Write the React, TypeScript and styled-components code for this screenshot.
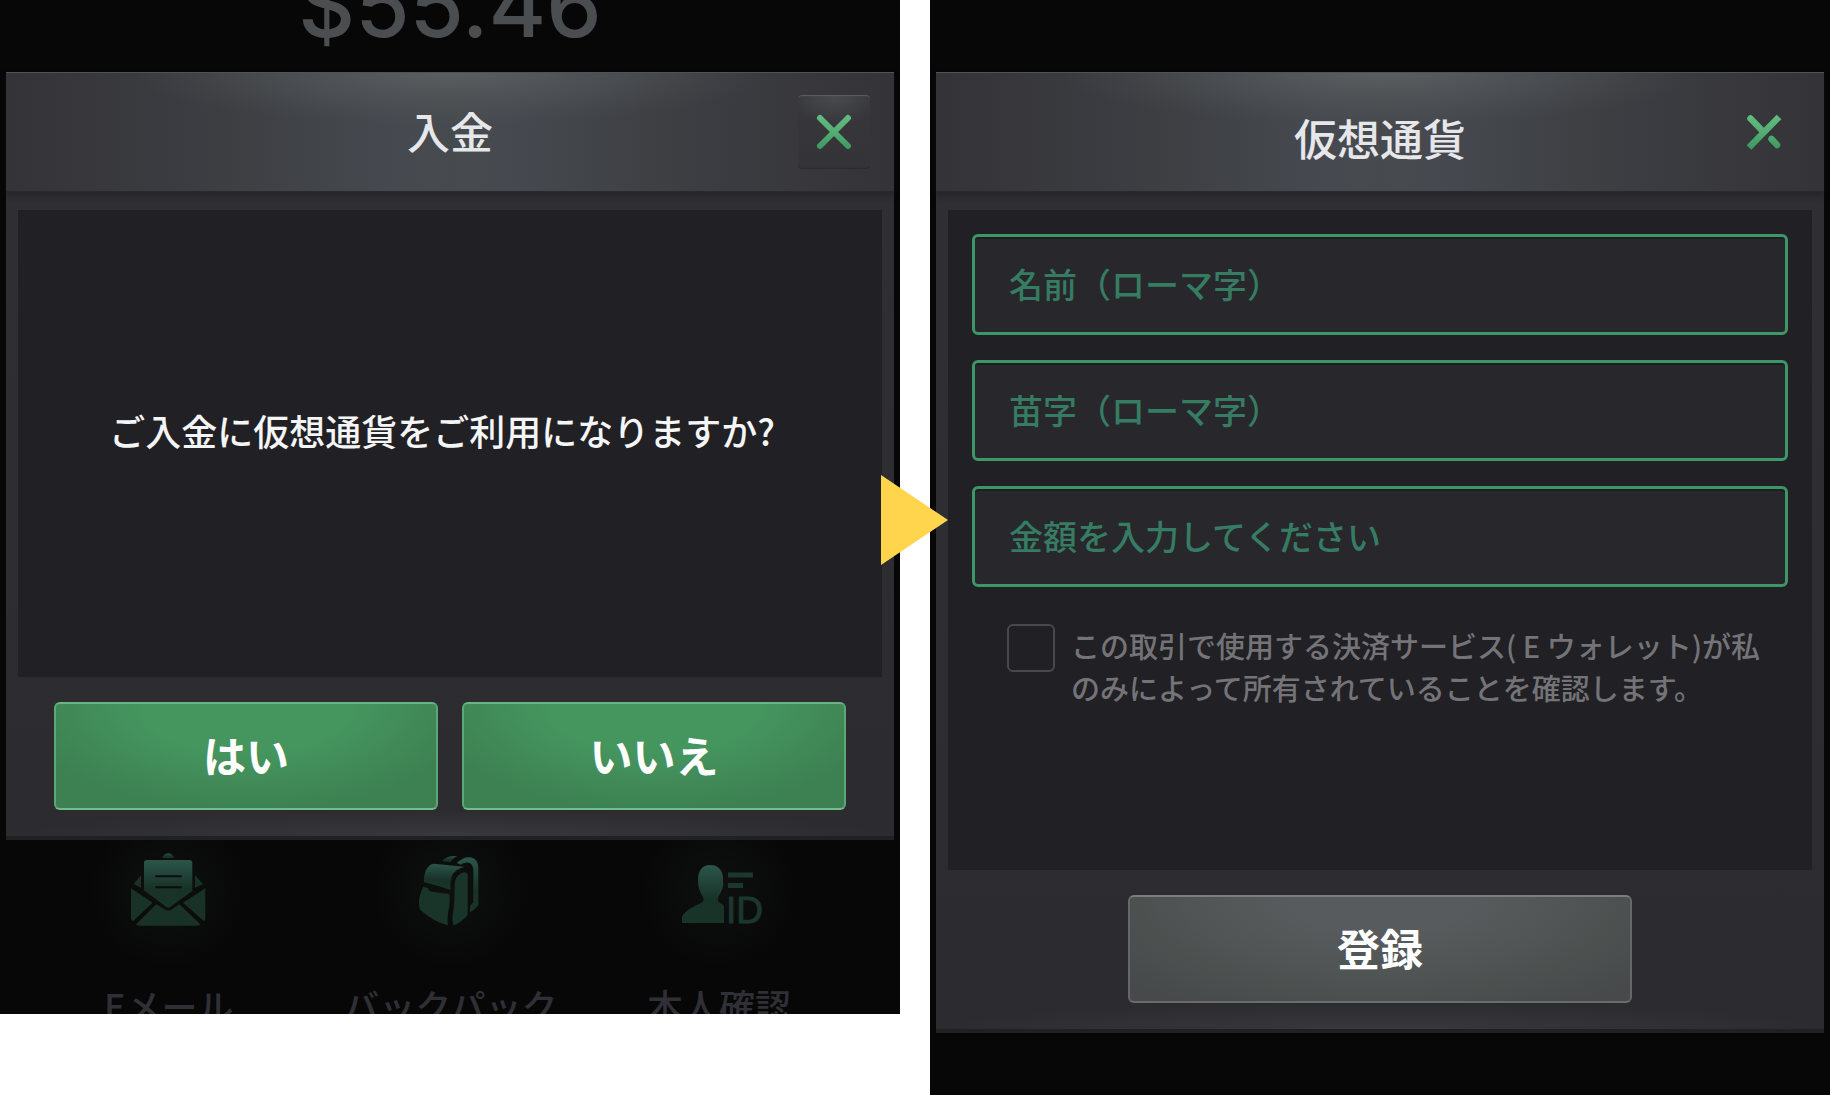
import React, { useState } from "react";
import styled, { createGlobalStyle, css } from "styled-components";

const color = {
  screen: "#070707",
  modal: "#302f34",
  modalLow: "#2c2c30",
  panel: "#212024",
  field: "#28272c",
  green: "#3d9668",
  placeholder: "#357c62",
  title: "#e6e7ea",
};

const GlobalStyle = createGlobalStyle`
  * { box-sizing: border-box; }
  body {
    margin: 0;
    background: #fff;
    font-family: "Noto Sans CJK JP", "Noto Sans", sans-serif;
  }
  button, input { font-family: inherit; }
`;

const Page = styled.main`
  display: grid;
  grid-template-columns: minmax(0, 1fr) 30px minmax(0, 1fr);
  min-height: 100vh;
`;

const Screen = styled.section<{ $fill?: boolean }>`
  display: flex;
  flex-direction: column;
  align-self: ${(p) => (p.$fill ? "stretch" : "start")};
  background: ${color.screen};
  overflow: hidden;
`;

const TopArea = styled.div`
  display: flex;
  justify-content: center;
  align-items: flex-end;
  height: 72px;
  overflow: hidden;
`;

const Balance = styled.div`
  padding-bottom: 17px;
  font-family: Inter, "Liberation Sans", sans-serif;
  font-size: 88px;
  font-weight: 500;
  line-height: 100px;
  color: #4b4e51;
`;

const Modal = styled.div`
  margin: 0 6px;
  background: radial-gradient(ellipse 50% 26px at 50% 100%, #39383d, transparent),
    linear-gradient(${color.modal}, ${color.modalLow});
  border-bottom: 4px solid #212023;
`;

const Header = styled.header`
  display: grid;
  grid-template-columns: 1fr auto 1fr;
  align-items: center;
  height: 120px;
  padding: 0 24px;
  border-top: 1px solid #505356;
  border-bottom: 1px solid #2a292d;
  box-shadow: 0 4px 6px rgba(20, 20, 24, 0.35);
  background: radial-gradient(
      ellipse 36% 52px at 50% 0,
      #5a5e60,
      rgba(86, 90, 92, 0.6) 40%,
      rgba(86, 90, 92, 0.15) 80%,
      rgba(86, 90, 92, 0) 100%
    ),
    linear-gradient(90deg, #343338, #3e4044 28%, #464a50 44%, #474a4d 50%, #464a50 56%, #3e4044 72%, #343338);
`;

const Title = styled.h2<{ $lowered?: boolean }>`
  grid-column: 2;
  margin: 0;
  padding: ${(p) => (p.$lowered ? "10px 0 0" : "0 0 4px")};
  font-size: 43px;
  font-weight: 500;
  line-height: 60px;
  color: ${color.title};
`;

const CloseButton = styled.button<{ $raised?: boolean }>`
  display: grid;
  place-items: center;
  justify-self: end;
  width: 72px;
  height: 74px;
  padding: 0;
  border: 0;
  border-radius: 4px;
  background: none;
  cursor: pointer;
  ${(p) =>
    p.$raised &&
    css`
      background: radial-gradient(ellipse 60% 30px at 50% 0, #484c4f, transparent),
        linear-gradient(#38373c, #343338);
      box-shadow: inset 0 2px 1px -1px #5c6062, inset 0 -2px 1px -1px #2b2a2e;
    `}
`;

const Content = styled.div`
  padding: 18px 12px 26px;
`;

const panel = css`
  background: ${color.panel};
`;

const Message = styled.div`
  ${panel}
  display: grid;
  place-items: center;
  min-height: 467px;
  padding-bottom: 28px;
`;

const Question = styled.p`
  margin: 0;
  padding-right: 16px;
  font-size: 36px;
  font-weight: 500;
  line-height: 54px;
  color: #f4f5f6;
`;

const Actions = styled.div`
  display: flex;
  justify-content: center;
  gap: 24px;
  padding: 25px 36px 0;
`;

const ActionButton = styled.button<{ $tone: "green" | "gray" }>`
  height: 108px;
  padding: 0 0 5px;
  border: 2px solid;
  border-radius: 6px;
  font-size: 43px;
  font-weight: 700;
  line-height: 60px;
  color: #fff;
  cursor: pointer;
  ${(p) =>
    p.$tone === "green"
      ? css`
          flex: 1;
          border-color: #6cb483 #5aa876 #74bd8b;
          background: radial-gradient(ellipse 62% 105% at 50% 0, #45955f 45%, #3d8051 100%);
        `
      : css`
          flex: 0 1 504px;
          border-color: #7b7d7e #636868 #686e6d;
          background: radial-gradient(ellipse 62% 115% at 50% 0, #575b5d 30%, #4c5150 80%, #47494a 110%);
        `}
`;

const Form = styled.form`
  ${panel}
  min-height: 660px;
  padding: 24px;
`;

const Fields = styled.div`
  display: grid;
  gap: 25px;
`;

const Field = styled.input`
  width: 100%;
  height: 101px;
  padding: 0 34px 3px;
  border: 3px solid ${color.green};
  border-radius: 6px;
  background: ${color.field};
  box-shadow: inset 0 2px 0 #1c1f1f;
  font-size: 34px;
  font-weight: 500;
  line-height: 48px;
  color: #57b98a;
  &::placeholder {
    color: ${color.placeholder};
    opacity: 1;
  }
`;

const Consent = styled.label`
  display: flex;
  align-items: flex-start;
  gap: 16px;
  padding: 37px 0 0 35px;
  font-size: 29px;
  font-weight: 500;
  line-height: 42px;
  color: #747478;
`;

const CheckBox = styled.input`
  flex: none;
  width: 48px;
  height: 48px;
  margin: 0;
  appearance: none;
  border: 2px solid #48494c;
  border-radius: 6px;
  cursor: pointer;
  &:checked {
    background: ${color.green};
  }
`;

const Divider = styled.div`
  position: relative;
`;

const Arrow = styled.svg`
  position: absolute;
  z-index: 1;
  top: 475px;
  left: 50%;
  width: 67px;
  height: 90px;
  margin-left: -34px;
`;

const Menu = styled.nav`
  display: grid;
  grid-template-columns: 11fr 11fr 10fr;
  height: 174px;
  padding: 0 53px 0 28px;
  overflow: hidden;
`;

const MenuLink = styled.a`
  display: flex;
  flex-direction: column;
  align-items: center;
  gap: 54px;
  padding-top: 11px;
  background: radial-gradient(circle 80px at 50% 50px, #0f1010, transparent);
  font-size: 36px;
  font-weight: 500;
  line-height: 50px;
  white-space: nowrap;
  color: #302f36;
  text-decoration: none;
`;

const IconBox = styled.span`
  display: flex;
  align-items: flex-end;
  height: 75px;
`;

const IconGradient = ({ id }: { id: string }) => (
  <linearGradient id={id} x1="0" y1="0" x2="0" y2="1">
    <stop offset="0" stopColor="#2c5549" />
    <stop offset="0.6" stopColor="#183228" />
    <stop offset="1" stopColor="#193429" />
  </linearGradient>
);

const CrossGradient = ({ id }: { id: string }) => (
  <linearGradient id={id} gradientUnits="userSpaceOnUse" x1="0" y1="0" x2="0" y2="36">
    <stop offset="0" stopColor="#62bd82" />
    <stop offset="0.5" stopColor="#55ad73" />
    <stop offset="1" stopColor="#3b9660" />
  </linearGradient>
);

function CrossIcon({ split }: { split?: boolean }) {
  const id = split ? "cross-split" : "cross";
  return (
    <svg width="36" height="36" viewBox="0 0 36 36" fill="none" aria-hidden="true">
      <defs>
        <CrossGradient id={id} />
      </defs>
      {split ? (
        <g stroke={`url(#${id})`} strokeWidth="6.5">
          <path d="M3 33.5 33 3" />
          <path d="M4.500 4.500 17 17.500" strokeLinecap="round" />
          <path d="M25.500 25 31 31" strokeLinecap="round" />
        </g>
      ) : (
        <path d="M4 4 32 32M32 4 4 32" stroke={`url(#${id})`} strokeWidth="6" strokeLinecap="round" />
      )}
    </svg>
  );
}

function MailIcon() {
  return (
    <svg width="75" height="73" viewBox="0 0 225 219" aria-hidden="true">
      <defs>
        <IconGradient id="mail" />
      </defs>
      <g fill="url(#mail)">
        <path d="M94 15Q98 2 112 1Q125 2 129 15Z" />
        <path d="M48 21H175Q184 21 184 30V114L117 162Q112 166 106 162L39 112V30Q39 21 48 21Z" />
      </g>
      <g fill="#183228">
        <path d="M8 93 30 67V104Z" />
        <path d="M216 93 192 67V104Z" />
        <path d="M0 106 65 149 6 205Q0 200 0 196Z" />
        <path d="M223 106 156 149 219 205Q223 200 223 196Z" />
        <path d="M76 154 103 170Q112 175 121 170L145 154 208 214Q206 218 198 218H24Q17 218 15 214Z" />
      </g>
      <path d="M73 70H152M73 103H152" stroke="#0a0d0c" strokeWidth="6" />
    </svg>
  );
}

function BackpackIcon() {
  return (
    <svg width="65" height="71" viewBox="0 0 195 213" aria-hidden="true">
      <defs>
        <IconGradient id="pack" />
      </defs>
      <g fill="url(#pack)">
        <path d="M72 18Q90 0 118 4Q106 8 96 21Z" />
        <path d="M116 24Q136 4 158 7Q181 12 181 40V148Q178 160 156 172V152L166 142V42Q162 20 143 23Q132 24 128 29Z" />
        <path d="M48 26 138 35Q112 44 103 60Q97 72 97 105L64 94 18 82Q16 52 32 34Q38 26 48 26Z" />
      </g>
      <g fill="#193429">
        <path d="M16 95 30 99Q34 112 48 110L64 113 94 117Q97 145 91 168Q87 190 90 211Q48 201 6 164Q-4 134 16 95Z" />
        <path d="M110 92Q110 66 126 57Q142 46 149 58V180Q132 202 106 211Q101 193 106 166Q110 142 110 92Z" />
      </g>
    </svg>
  );
}

function IdentityIcon() {
  return (
    <svg width="92" height="62" viewBox="-8 0 92 62" aria-hidden="true">
      <defs>
        <IconGradient id="identity" />
      </defs>
      <path
        d="M29 1C38 1 43 7 42 18C43 25 39 29 37 34V37C39 40 43 40 43 43V59H1V53C4 46 14 42 20 39C24 37 23 34 20 30C18 25 17 22 17 16C17 7 21 1 29 1Z"
        fill="url(#identity)"
      />
      <path d="M47 11H72M47 21.500H62" stroke="#1c382e" strokeWidth="5" />
      <text
        x="45"
        y="59"
        fontFamily="Liberation Sans, Arial, sans-serif"
        fontSize="37"
        fill="#1c382e"
        stroke="#1c382e"
      >
        ID
      </text>
    </svg>
  );
}

export default function App() {
  const [agreed, setAgreed] = useState(false);
  return (
    <>
      <GlobalStyle />
      <Page>
        <Screen>
          <TopArea>
            <Balance>$55.46</Balance>
          </TopArea>
          <Modal role="dialog" aria-labelledby="deposit-title">
            <Header>
              <Title id="deposit-title">入金</Title>
              <CloseButton type="button" aria-label="閉じる" $raised>
                <CrossIcon />
              </CloseButton>
            </Header>
            <Content>
              <Message>
                <Question>ご入金に仮想通貨をご利用になりますか?</Question>
              </Message>
              <Actions>
                <ActionButton type="button" $tone="green">はい</ActionButton>
                <ActionButton type="button" $tone="green">いいえ</ActionButton>
              </Actions>
            </Content>
          </Modal>
          <Menu>
            <MenuLink href="#mail">
              <IconBox><MailIcon /></IconBox>
              Eメール
            </MenuLink>
            <MenuLink href="#backpack">
              <IconBox><BackpackIcon /></IconBox>
              バックパック
            </MenuLink>
            <MenuLink href="#identity">
              <IconBox><IdentityIcon /></IconBox>
              本人確認
            </MenuLink>
          </Menu>
        </Screen>

        <Divider>
          <Arrow viewBox="0 0 67 90" aria-hidden="true">
            <path d="M0 0 67 45 0 90Z" fill="#ffd54d" />
          </Arrow>
        </Divider>

        <Screen $fill>
          <TopArea />
          <Modal role="dialog" aria-labelledby="crypto-title">
            <Header>
              <Title id="crypto-title" $lowered>仮想通貨</Title>
              <CloseButton type="button" aria-label="閉じる">
                <CrossIcon split />
              </CloseButton>
            </Header>
            <Content>
              <Form id="crypto-form" onSubmit={(e) => e.preventDefault()}>
                <Fields>
                  <Field type="text" placeholder="名前（ローマ字）" aria-label="名前（ローマ字）" />
                  <Field type="text" placeholder="苗字（ローマ字）" aria-label="苗字（ローマ字）" />
                  <Field type="text" inputMode="decimal" placeholder="金額を入力してください" aria-label="金額を入力してください" />
                </Fields>
                <Consent>
                  <CheckBox type="checkbox" checked={agreed} onChange={(e) => setAgreed(e.target.checked)} />
                  <span>
                    この取引で使用する決済サービス( E ウォレット)が私
                    <br />
                    のみによって所有されていることを確認します。
                  </span>
                </Consent>
              </Form>
              <Actions>
                <ActionButton type="submit" form="crypto-form" $tone="gray">登録</ActionButton>
              </Actions>
            </Content>
          </Modal>
        </Screen>
      </Page>
    </>
  );
}
